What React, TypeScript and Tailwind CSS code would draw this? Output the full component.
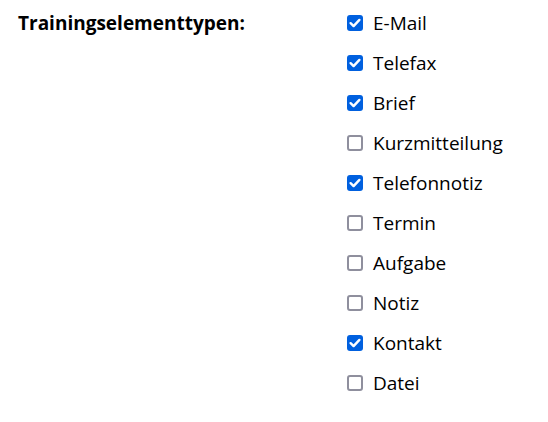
const items: { label: string; checked: boolean }[] = [
  { label: "E-Mail", checked: true },
  { label: "Telefax", checked: true },
  { label: "Brief", checked: true },
  { label: "Kurzmitteilung", checked: false },
  { label: "Telefonnotiz", checked: true },
  { label: "Termin", checked: false },
  { label: "Aufgabe", checked: false },
  { label: "Notiz", checked: false },
  { label: "Kontakt", checked: true },
  { label: "Datei", checked: false },
];

function Box({ checked }: { checked: boolean }) {
  if (checked) {
    return (
      <span className="mt-[5px] flex h-4 w-4 shrink-0 items-center justify-center rounded-[3px] bg-[#0060df]">
        <svg viewBox="0 0 16 16" className="h-4 w-4">
          <polyline
            points="3.6,8.2 6.6,11.1 12.4,4.9"
            fill="none"
            stroke="white"
            strokeWidth="2.4"
            strokeLinecap="round"
            strokeLinejoin="round"
          />
        </svg>
      </span>
    );
  }
  return <span className="mt-[5px] h-4 w-4 shrink-0 rounded-[3px] border-2 border-[#8f8f9d] bg-white" />;
}

export default function App() {
  return (
    <div className="flex bg-white pl-[18px] pt-[10px] text-black">
      <div className="w-[329px] font-['Open_Sans',sans-serif] text-[19px] font-bold leading-[26px]">
        Trainingselementtypen:
      </div>
      <div className="flex flex-col">
        {items.map((item) => (
          <label key={item.label} className="flex h-[40px] cursor-pointer items-start gap-[10px]">
            <Box checked={item.checked} />
            <span className="font-['Open_Sans',sans-serif] text-[19px] leading-[26px]">{item.label}</span>
          </label>
        ))}
      </div>
    </div>
  );
}
